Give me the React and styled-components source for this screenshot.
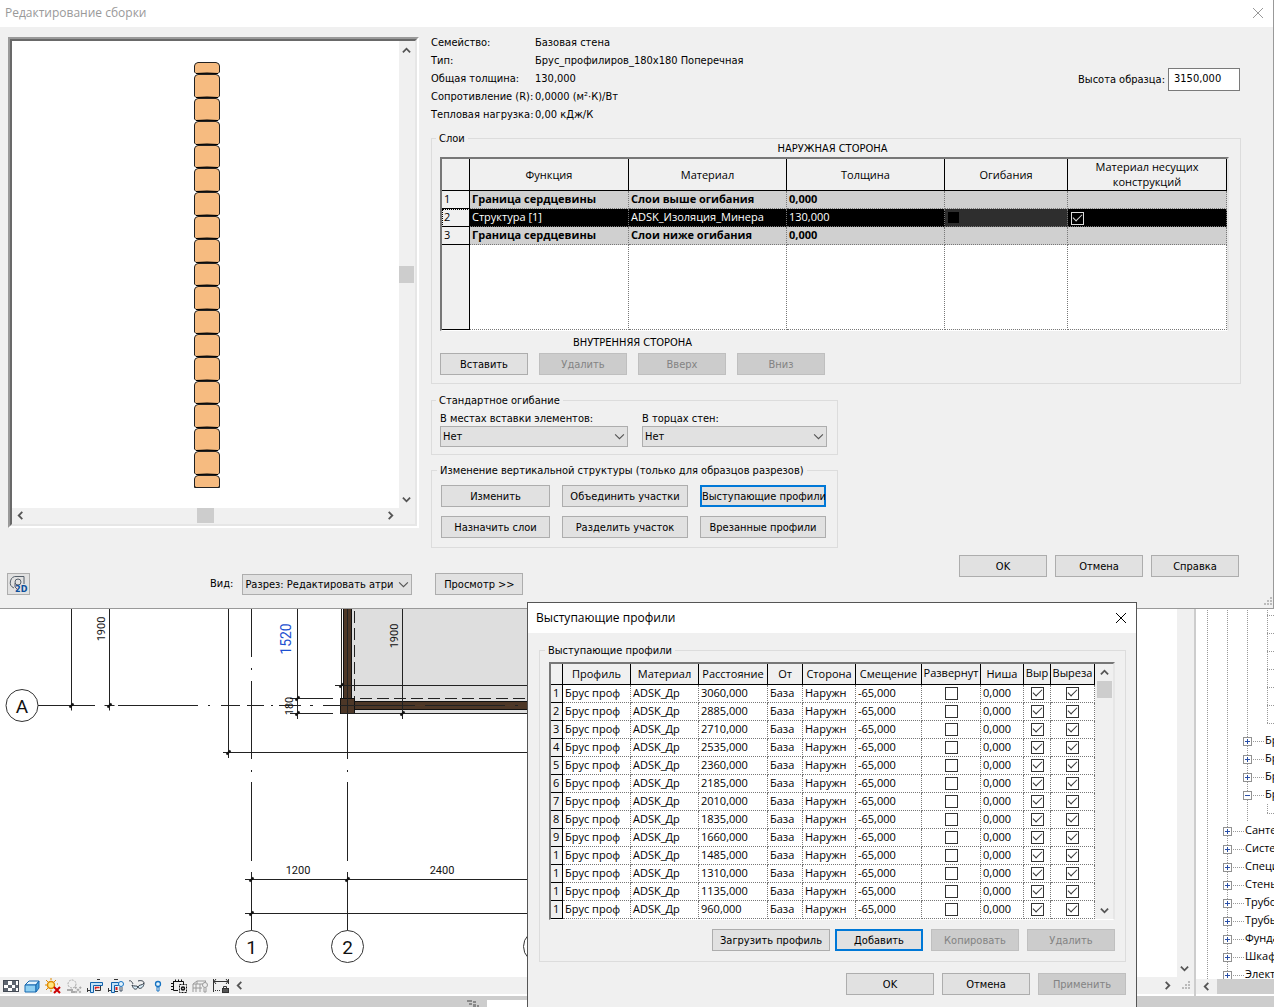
import React from 'react'
import styled, { createGlobalStyle, css } from 'styled-components'

const GlobalStyle = createGlobalStyle`
*, *::before {
  box-sizing: border-box;
}
body {
  margin: 0;
  background: #fff;
  color: #000;
  font-family: "DejaVu Sans Condensed", Roboto, sans-serif;
  font-size: 11px;
  line-height: 12px;
}
button, input, select {
  font: inherit;
  color: inherit;
  margin: 0;
  padding: 0;
  border-radius: 0;
}
`

const gridFont = css`
font-family: "Open Sans", "Noto Sans", sans-serif;
`

const dotsDown = 'repeating-linear-gradient(#999 0 1px, transparent 1px 2px)'
const dotsAcross = 'repeating-linear-gradient(90deg, #999 0 1px, transparent 1px 2px)'

const Desktop = styled.div`
position: relative;
display: flex;
flex-direction: column;
min-height: 100vh;
overflow: hidden;
`

/* ---------- shared controls ---------- */

const Button = styled.button`
flex: none;
width: ${(p) => p.$w || 88}px;
height: 22px;
padding-top: 1px;
white-space: nowrap;
background: #e1e1e1;
border: 1px solid #adadad;
${(p) => p.$focused && css`
border: 2px solid #0078d7;
`}
&:disabled {
  background: #ccc;
  border-color: #bfbfbf;
  color: #838383;
}
`

const Group = styled.fieldset`
min-width: 0;
margin: 0;
padding: ${(p) => p.$pad};
border: 1px solid #dcdcdc;
`

const Legend = styled.legend`
height: 10px;
margin-left: -4px;
padding: 0 3px;
line-height: 12px;
`

const ButtonRow = styled.div`
display: flex;
gap: ${(p) => p.$gap}px;
justify-content: ${(p) => p.$justify || 'flex-start'};
`

const TitleBar = styled.header`
display: flex;
align-items: center;
justify-content: space-between;
height: ${(p) => p.$h}px;
padding: 0 9px ${(p) => p.$drop || 0}px ${(p) => p.$left}px;
background: #fff;
color: ${(p) => p.$color};
`

const Title = styled.h1`
margin: 0;
${gridFont}
font-size: 12px;
font-weight: normal;
line-height: 16px;
`

const IconButton = styled.button`
display: flex;
align-items: center;
justify-content: center;
flex: none;
width: ${(p) => p.$w || 13}px;
height: ${(p) => p.$h || 13}px;
background: none;
border: 0;
`

const SelectBox = styled.span`
display: grid;
align-items: center;
width: ${(p) => p.$w}px;
height: 21px;
& > * {
  grid-area: 1 / 1;
}
& > svg {
  justify-self: end;
  margin-right: 3px;
  pointer-events: none;
}
`

const Select = styled.select`
appearance: none;
width: 100%;
height: 21px;
padding: 1px 18px 0 2px;
background: #e1e1e1;
border: 1px solid #adadad;
`

const Check = styled.input`
appearance: none;
display: block;
width: 13px;
height: 13px;
margin: ${(p) => (p.$left ? '3px 0 0 3px' : '2px auto 0')};
background: ${(p) => (p.$dark ? '#000' : '#fff')};
border: 1px solid ${(p) => (p.$dark ? '#ddd' : '#333')};
&:checked::before {
  content: '';
  display: block;
  width: 9px;
  height: 5px;
  margin: 1px 0 0 1px;
  border: solid ${(p) => (p.$dark ? '#ddd' : '#333')};
  border-width: 0 0 1px 1px;
  transform: rotate(-45deg);
}
&:disabled {
  width: 11px;
  height: 11px;
  border-color: #000;
}
`

const Chevron = ({ dir, color = '#555', thin }) => {
  const d = {
    up: 'M1 7 L5 3 L9 7',
    down: 'M1 3 L5 7 L9 3',
    left: 'M7 1 L3 5 L7 9',
    right: 'M3 1 L7 5 L3 9',
  }[dir]
  return (
    <svg width={thin ? 11 : 9} height={thin ? 11 : 9} viewBox="0 0 10 10" fill="none" stroke={color} strokeWidth={thin ? 1 : 2}>
      <path d={d} />
    </svg>
  )
}

const CloseIcon = () => (
  <svg width="12" height="12" viewBox="0 0 12 12" fill="none" stroke="currentColor">
    <path d="M1 1 L11 11 M11 1 L1 11" />
  </svg>
)

const Grip = () => (
  <svg width="9" height="9" viewBox="0 0 9 9" fill="#bbb">
    <path d="M6 0h2v2h-2zM3 3h2v2h-2zM6 3h2v2h-2zM0 6h2v2h-2zM3 6h2v2h-2zM6 6h2v2h-2z" />
  </svg>
)

/* ---------- scroll bars ---------- */

const ScrollBar = styled.div`
display: flex;
flex: none;
flex-direction: ${(p) => (p.$across ? 'row' : 'column')};
justify-content: space-between;
align-items: flex-start;
background: #f0f0f0;
${(p) => (p.$across ? 'height' : 'width')}: ${(p) => p.$size}px;
`

const Thumb = styled.div`
width: ${(p) => p.$w}px;
height: ${(p) => p.$h}px;
background: #cdcdcd;
`

/* ---------- assembly dialog ---------- */

const AssemblyDialog = styled.section`
background: #f0f0f0;
border-right: 1px solid #999;
border-bottom: 1px solid #999;
`

const AssemblyBody = styled.div`
display: flex;
align-items: flex-start;
padding: 0 32px 0 8px;
`

const Preview = styled.div`
display: flex;
flex: none;
flex-direction: column;
width: 411px;
height: 491px;
margin: 10px 12px 0 0;
border: 2px solid;
border-color: #9a9a9a #fff #fff #9a9a9a;
`

const PreviewInner = styled.div`
display: grid;
grid-template: 1fr 16px / 1fr 16px;
flex: 1;
border: 2px solid;
border-color: #696969 #e6e6e6 #e6e6e6 #696969;
background: #f0f0f0;
`

const PreviewCanvas = styled.svg`
width: 100%;
height: 100%;
background: #fff;
`

const Settings = styled.div`
flex: 1;
min-width: 0;
`

const Summary = styled.div`
display: flex;
justify-content: space-between;
padding-top: 7px;
`

const Facts = styled.dl`
display: grid;
grid-template-columns: 104px auto;
margin: 0;
line-height: 18px;
& dd {
  margin: 0;
}
`

const HeightField = styled.label`
display: flex;
align-items: center;
gap: 3px;
height: 23px;
margin: 34px 1px 0 0;
& input {
  width: 72px;
  height: 23px;
  padding: 0 5px 2px;
  background: #fff;
  border: 1px solid #7a7a7a;
}
`

const Caption = styled.div`
text-align: center;
padding: ${(p) => p.$pad};
`

const Split = styled.div`
width: 407px;
`

const LabeledSelects = styled.div`
display: flex;
gap: 14px;
& label {
  display: block;
  margin-bottom: 1px;
}
`

const Stack = styled.div`
display: flex;
flex-direction: column;
gap: 9px;
`

const AssemblyFooter = styled.footer`
display: flex;
justify-content: space-between;
height: 60px;
padding: 7px 0 0 7px;
`

const ViewTools = styled.div`
display: flex;
align-items: center;
height: 22px;
margin-top: 18px;
& label {
  margin: 0 9px 0 180px;
}
& ${Button} {
  margin-left: 23px;
}
`

const TwoDButton = styled.button`
width: 23px;
height: 22px;
padding: 1px 0 0 1px;
background: #e1e1e1;
border: 1px solid #adadad;
`

const Corner = styled.div`
align-self: flex-end;
height: 11px;
margin-left: 17px;
`

/* ---------- grids ---------- */

const GridFrame = styled.div`
display: flex;
border: solid;
border-width: 2px 2px 1px;
border-color: #777 #e6e6e6 #fff #777;
background: #f0f0f0;
`

const Grid = styled.table`
${gridFont}
table-layout: fixed;
width: ${(p) => p.$w || '100%'};
border-spacing: 0;
line-height: 15px;
& td, & th {
  overflow: hidden;
  padding: 0;
  font-weight: normal;
  white-space: nowrap;
}
& thead th {
  height: ${(p) => p.$head}px;
  padding-bottom: 1px;
  border-right: 1px solid #000;
  border-bottom: 1px solid #000;
  background: #f0f0f0;
}
`

const RowHead = styled.th`
height: 18px;
text-align: left;
vertical-align: top;
background: #f0f0f0;
border: solid #000;
border-width: 0 1px 1px 0;
&&& {
  padding-left: 2px;
}
${(p) => p.$current && css`
outline: 1px dotted #000;
outline-offset: -1px;
`}
`

const Cell = styled.td`
height: ${(p) => p.$h || 18}px;
vertical-align: top;
color: ${(p) => p.$color || '#000'};
background: ${(p) => p.$bg || '#fff'};
border: dotted #777;
border-width: 0 1px 1px 0;
&&& {
  padding-left: ${(p) => (p.$check ? 0 : 2)}px;
  font-weight: ${(p) => (p.$bold ? 'bold' : 'normal')};
}
`

const TallHead = styled.div`
height: 19px;
overflow: hidden;
line-height: 17px;
`

const layerColumns = [28, 159, 158, 158, 123, 159]

const layers = [
  { fn: 'Граница сердцевины', material: 'Слои выше огибания', width: '0,000' },
  { fn: 'Структура [1]', material: 'ADSK_Изоляция_Минера', width: '130,000', selected: true },
  { fn: 'Граница сердцевины', material: 'Слои ниже огибания', width: '0,000' },
]

const LayersTable = () => (
  <GridFrame>
    <Grid $head={32}>
      <colgroup>
        {layerColumns.map((w, i) => <col key={i} width={w} />)}
      </colgroup>
      <thead>
        <tr>
          <th></th>
          <th>Функция</th>
          <th>Материал</th>
          <th>Толщина</th>
          <th>Огибания</th>
          <th>Материал несущих<br />конструкций</th>
        </tr>
      </thead>
      <tbody>
        {layers.map((l, i) => {
          const look = l.selected
            ? { $bg: '#000', $color: '#fff' }
            : { $bg: '#d0d0d0', $bold: true }
          return (
            <tr key={i}>
              <RowHead scope="row" $current={l.selected}>{i + 1}</RowHead>
              <Cell {...look}>{l.fn}</Cell>
              <Cell {...look}>{l.material}</Cell>
              <Cell {...look}>{l.width}</Cell>
              <Cell {...look} $check $bg={l.selected ? '#2e2e2e' : '#d0d0d0'}>
                {l.selected && <Check type="checkbox" disabled $dark $left aria-label="Огибания" />}
              </Cell>
              <Cell {...look} $check>
                {l.selected && <Check type="checkbox" defaultChecked $dark $left aria-label="Материал несущих конструкций" />}
              </Cell>
            </tr>
          )
        })}
        <tr>
          <RowHead></RowHead>
          <Cell $h={85}></Cell>
          <Cell></Cell>
          <Cell></Cell>
          <Cell></Cell>
          <Cell></Cell>
        </tr>
      </tbody>
    </Grid>
  </GridFrame>
)

/* top edges of the logs in the wall section */
const logs = [62, 74, 98, 121, 145, 168, 192, 216, 239, 263, 286, 310, 334, 357, 381, 404, 428, 451, 475, 488]

const WallPreview = () => (
  <PreviewCanvas role="img" aria-label="Разрез стены">
    <g transform="translate(-12 -41)" stroke="#222" fill="#f6bb80">
      {logs.slice(0, -1).map((y, i) => {
        const bottom = logs[i + 1]
        return (
          <g key={y}>
            <path d={`M194.5 ${bottom - 2} V${y + 4} Q194.5 ${y + 1} 198 ${y + 0.5} H216 Q219.5 ${y + 1} 219.5 ${y + 4} V${bottom - 2} L218 ${bottom - 0.5} H196 Z`} />
            {i > 0 && <path d={`M196 ${y - 0.5} Q207 ${y - 1.5} 218 ${y - 0.5}`} fill="none" stroke="#000" />}
          </g>
        )
      })}
      <path d="M194.5 485 V487.5 H219.5 V485" fill="none" />
    </g>
  </PreviewCanvas>
)

const Assembly = () => (
  <AssemblyDialog>
    <TitleBar $h={27} $left={5} $drop={2} $color="#999">
      <Title>Редактирование сборки</Title>
      <IconButton aria-label="Закрыть"><CloseIcon /></IconButton>
    </TitleBar>

    <AssemblyBody>
      <Preview>
        <PreviewInner>
          <WallPreview />
          <ScrollBar $size={16}>
            <IconButton aria-label="Вверх" $w={15} $h={18}><Chevron dir="up" /></IconButton>
            <Thumb $w={15} $h={17} />
            <IconButton aria-label="Вниз" $w={15} $h={18}><Chevron dir="down" /></IconButton>
          </ScrollBar>
          <ScrollBar $across $size={16}>
            <IconButton aria-label="Влево" $w={17} $h={15}><Chevron dir="left" /></IconButton>
            <Thumb $w={17} $h={15} />
            <IconButton aria-label="Вправо" $w={17} $h={15}><Chevron dir="right" /></IconButton>
          </ScrollBar>
        </PreviewInner>
      </Preview>

      <Settings>
        <Summary>
          <Facts>
            <dt>Семейство:</dt><dd>Базовая стена</dd>
            <dt>Тип:</dt><dd>Брус_профилиров_180x180 Поперечная</dd>
            <dt>Общая толщина:</dt><dd>130,000</dd>
            <dt>Сопротивление (R):</dt><dd>0,0000 (м²·К)/Вт</dd>
            <dt>Тепловая нагрузка:</dt><dd>0,00 кДж/К</dd>
          </Facts>
          <HeightField>
            Высота образца:
            <input type="text" defaultValue="3150,000" />
          </HeightField>
        </Summary>

        <Spaced $top={9}>
          <Group $pad="0 11px 8px 8px">
            <Legend>Слои</Legend>
            <Caption $pad="0 4px 2px 0">НАРУЖНАЯ СТОРОНА</Caption>
            <LayersTable />
            <Caption $pad="6px 404px 4px 0">ВНУТРЕННЯЯ СТОРОНА</Caption>
            <ButtonRow $gap={11}>
              <Button>Вставить</Button>
              <Button disabled>Удалить</Button>
              <Button disabled>Вверх</Button>
              <Button disabled>Вниз</Button>
            </ButtonRow>
          </Group>
        </Spaced>

        <Split>
          <Spaced $top={11}>
            <Group $pad="8px 8px 7px 8px">
              <Legend>Стандартное огибание</Legend>
              <LabeledSelects>
                <div>
                  <label htmlFor="inserts">В местах вставки элементов:</label>
                  <SelectBox $w={188}>
                    <Select id="inserts"><option>Нет</option></Select>
                    <Chevron dir="down" thin />
                  </SelectBox>
                </div>
                <div>
                  <label htmlFor="ends">В торцах стен:</label>
                  <SelectBox $w={185}>
                    <Select id="ends"><option>Нет</option></Select>
                    <Chevron dir="down" thin />
                  </SelectBox>
                </div>
              </LabeledSelects>
            </Group>
          </Spaced>

          <Spaced $top={10}>
            <Group $pad="10px 8px 9px 9px">
              <Legend>Изменение вертикальной структуры (только для образцов разрезов)</Legend>
              <Stack>
                <ButtonRow $gap={12}>
                  <Button $w={109}>Изменить</Button>
                  <Button $w={126}>Объединить участки</Button>
                  <Button $w={126} $focused>Выступающие профили</Button>
                </ButtonRow>
                <ButtonRow $gap={12}>
                  <Button $w={109}>Назначить слои</Button>
                  <Button $w={126}>Разделить участок</Button>
                  <Button $w={126}>Врезанные профили</Button>
                </ButtonRow>
              </Stack>
            </Group>
          </Spaced>
        </Split>
      </Settings>
    </AssemblyBody>

    <AssemblyFooter>
      <ViewTools>
        <TwoDButton aria-label="2D">
          <svg width="20" height="19" viewBox="0 0 20 19" fill="none" stroke="#555f6a">
            <path d="M5 13 A6 6 0 0 1 8 1.500 H15 V9" />
            <circle cx="9" cy="7" r="3" />
            <path d="M6 8 V12 L8 14" />
            <text x="6" y="17" fill="#0b4f9c" stroke="none" fontSize="9" fontWeight="bold">2D</text>
          </svg>
        </TwoDButton>
        <label htmlFor="view">Вид:</label>
        <SelectBox $w={170}>
          <Select id="view"><option>Разрез: Редактировать атри</option></Select>
          <Chevron dir="down" thin />
        </SelectBox>
        <Button>Просмотр &gt;&gt;</Button>
      </ViewTools>
      <ButtonRow $gap={8}>
        <Button>OK</Button>
        <Button>Отмена</Button>
        <Button>Справка</Button>
        <Corner><Grip /></Corner>
      </ButtonRow>
    </AssemblyFooter>
  </AssemblyDialog>
)

/* ---------- profiles dialog ---------- */

const Spaced = styled.div`
margin-top: ${(p) => p.$top}px;
`

const ProfilesDialog = styled.section`
position: absolute;
left: 527px;
top: 602px;
bottom: 0;
width: 610px;
overflow: hidden;
background: #f0f0f0;
border: solid #555;
border-width: 1px 1px 0;
`

const ProfilesBody = styled.div`
padding: 12px 10px 11px 11px;
`

const profileColumns = [12, 68, 68, 69, 35, 53, 66, 59, 43, 27, 44]

const distances = ['3060', '2885', '2710', '2535', '2360', '2185', '2010', '1835', '1660', '1485', '1310', '1135', '960']

const ProfilesTable = () => (
  <GridFrame>
    <Grid $head={21} $w="544px">
      <colgroup>
        {profileColumns.map((w, i) => <col key={i} width={w} />)}
      </colgroup>
      <thead>
        <tr>
          <th></th>
          <th>Профиль</th>
          <th>Материал</th>
          <th>Расстояние</th>
          <th>От</th>
          <th>Сторона</th>
          <th>Смещение</th>
          <th><TallHead>Развернут</TallHead></th>
          <th>Ниша</th>
          <th><TallHead>Выр</TallHead></th>
          <th><TallHead>Выреза</TallHead></th>
        </tr>
      </thead>
      <tbody>
        {distances.map((d, i) => (
          <tr key={d}>
            <RowHead scope="row">{i < 9 ? i + 1 : 1}</RowHead>
            <Cell>Брус проф</Cell>
            <Cell>ADSK_Др</Cell>
            <Cell>{d},000</Cell>
            <Cell>База</Cell>
            <Cell>Наружн</Cell>
            <Cell>-65,000</Cell>
            <Cell $check><Check type="checkbox" aria-label="Развернут" /></Cell>
            <Cell>0,000</Cell>
            <Cell $check><Check type="checkbox" defaultChecked aria-label="Вырезает" /></Cell>
            <Cell $check><Check type="checkbox" defaultChecked aria-label="Вырезаемый" /></Cell>
          </tr>
        ))}
      </tbody>
    </Grid>
    <ProfilesScroll $size={15}>
      <div>
        <IconButton aria-label="Вверх" $w={15} $h={17}><Chevron dir="up" /></IconButton>
        <Thumb $w={15} $h={17} />
      </div>
      <IconButton aria-label="Вниз" $w={15} $h={17}><Chevron dir="down" /></IconButton>
    </ProfilesScroll>
  </GridFrame>
)

const ProfilesScroll = styled(ScrollBar)`
margin-left: 2px;
`

const Profiles = () => (
  <ProfilesDialog>
    <TitleBar $h={30} $left={8} $color="#000">
      <Title>Выступающие профили</Title>
      <IconButton aria-label="Закрыть"><CloseIcon /></IconButton>
    </TitleBar>
    <ProfilesBody>
      <Group $pad="7px 10px 10px 9px">
        <Legend>Выступающие профили</Legend>
        <ProfilesTable />
        <Spaced $top={9}>
          <ButtonRow $gap={5} $justify="flex-end">
            <Button $w={118}>Загрузить профиль</Button>
            <ButtonRow $gap={8}>
              <Button $focused>Добавить</Button>
              <Button disabled>Копировать</Button>
              <Button disabled>Удалить</Button>
            </ButtonRow>
          </ButtonRow>
        </Spaced>
      </Group>
      <Spaced $top={11}>
        <ButtonRow $gap={8} $justify="flex-end">
          <Button>OK</Button>
          <Button>Отмена</Button>
          <Button disabled>Применить</Button>
        </ButtonRow>
      </Spaced>
    </ProfilesBody>
  </ProfilesDialog>
)

/* ---------- workspace ---------- */

const Workspace = styled.main`
display: flex;
flex: 1;
min-height: 0;
`

const DrawingPane = styled.div`
display: flex;
flex: 1;
flex-direction: column;
min-width: 0;
`

const DrawingArea = styled.div`
display: flex;
flex: 1;
min-height: 0;
`

const Drawing = styled.svg`
flex: 1;
min-width: 0;
height: auto;
background: #fff;
font-family: Roboto, "Liberation Sans", sans-serif;
`

const ViewBar = styled.div`
display: flex;
align-items: center;
height: 17px;
margin-bottom: 2px;
background: #f0f0f0;
`

const ViewBarEnd = styled.div`
display: flex;
align-items: center;
gap: 8px;
margin-left: auto;
padding-right: 3px;
`

const Tick = ({ x, y }) => (
  <g>
    <path d={`M${x - 5} ${y} H${x + 5} M${x} ${y - 5} V${y + 5}`} stroke="#222" />
    <path d={`M${x - 2} ${y + 2} L${x + 2} ${y - 2}`} stroke="#111" strokeWidth="2" />
  </g>
)

const Bubble = ({ x, y, label }) => (
  <g>
    <circle cx={x} cy={y} r="16" fill="#fff" stroke="#333" />
    <text x={x} y={y + 7} fontSize="19" textAnchor="middle" fill="#111">{label}</text>
  </g>
)

const VerticalText = ({ x, y, size = 11, fill = '#111', children }) => (
  <text transform={`translate(${x} ${y}) rotate(-90)`} fontSize={size} textAnchor="middle" fill={fill}>{children}</text>
)

const FloorPlan = () => (
  <Drawing role="img" aria-label="План этажа">
    <g transform="translate(0 -609)">
      <rect x="341" y="600" width="260" height="113" fill="#dedede" />
      <rect x="341" y="600" width="3" height="100" fill="#fff" />
      <g fill="#4d3727" stroke="#111">
        <rect x="343.5" y="600.5" width="8" height="98" />
        <rect x="354.5" y="701.5" width="250" height="8" />
        <rect x="340.5" y="698.5" width="14" height="15" />
      </g>
      <g stroke="#222" fill="none">
        <path d="M71.5 600 V709 M109.5 600 V709 M228.5 600 V758 M297.5 600 V719 M341.5 600 V698 M402.5 600 V719" />
        <path d="M38 705.500 H95 M118 705.500 H198 M208 705.500 H210 M221 705.500 H240 M247 705.500 H264 M271 705.500 H273 M279 705.500 H301 M310 705.500 H313 M323 705.500 H415 M425 705.500 H505 M515 705.500 H518" />
        <path d="M251.500 600 V657 M251.500 668 V670 M251.500 681 V759 M251.500 770 V772 M251.500 782 V861 M251.500 872 V880 M251.500 884 V931" />
        <path d="M347.500 600 V759 M347.500 770 V772 M347.500 782 V861 M347.500 872 V880 M347.500 884 V931" />
        <path d="M335 685.500 H600 M290 698.500 H333 M290 713.500 H333 M341 713.500 H600" />
        <path d="M354.500 611 V698 M360 698.500 H600" strokeDasharray="12 5" />
        <path d="M223 752.500 H600 M245 879.500 H600 M245 913.500 H600" />
      </g>
      <Tick x={71.5} y={705.5} />
      <Tick x={109.5} y={705.5} />
      <Tick x={228.5} y={752.5} />
      <Tick x={297.5} y={698.5} />
      <Tick x={297.5} y={713.5} />
      <Tick x={341.5} y={685.5} />
      <Tick x={402.5} y={713.5} />
      <Tick x={251.5} y={879.5} />
      <Tick x={347.5} y={879.5} />
      <Tick x={251.5} y={913.5} />
      <VerticalText x={105} y={629}>1900</VerticalText>
      <VerticalText x={398} y={636}>1900</VerticalText>
      <VerticalText x={291} y={639} size={14} fill="#1c4fd0">1520</VerticalText>
      <VerticalText x={293} y={706}>180</VerticalText>
      <text x="298" y="874" fontSize="11" textAnchor="middle" fill="#111">1200</text>
      <text x="442" y="874" fontSize="11" textAnchor="middle" fill="#111">2400</text>
      <Bubble x={22} y={705.5} label="A" />
      <Bubble x={251.5} y={946.5} label="1" />
      <Bubble x={347.5} y={946.5} label="2" />
      <circle cx="539.5" cy="946.5" r="16" fill="#fff" stroke="#333" />
    </g>
  </Drawing>
)

const viewIcons = [
  {
    name: 'Уровень детализации',
    art: (
      <g>
        <rect x="0.500" y="2.500" width="15" height="11" fill="#fff" stroke="#444b55" />
        <path d="M1 3h4v4h-4zM9 3h4v4h-4zM5 7h4v3h-4zM12 7h3v3h-3zM1 10h4v3h-4zM9 10h4v3h-4z" fill="#5d6570" />
      </g>
    ),
  },
  {
    name: 'Визуальный стиль',
    art: (
      <g stroke="#1668b0" strokeLinejoin="round">
        <path d="M1 7 L5 3 H15 L12 7 Z" fill="#e4f4fd" />
        <path d="M1 7 H12 V14 H1 Z" fill="#8fd0f2" />
        <path d="M12 7 L15 3 V10 L12 14 Z" fill="#4ea6dc" />
      </g>
    ),
  },
  {
    name: 'Траектория солнца',
    art: (
      <g fill="none">
        <path d="M6 0V2M1 2L3 4M0 7H2M1 12L3 10M11 2L9 4M6 14V12M12 6H13" stroke="#e08a00" />
        <circle cx="6" cy="7" r="3.500" fill="#ffe680" stroke="#e08a00" strokeWidth="1.500" />
        <path d="M9 9L15 15M15 9L9 15" stroke="#c00" strokeWidth="2" />
      </g>
    ),
  },
  {
    name: 'Тени',
    art: (
      <g fill="none" stroke="#aaa">
        <circle cx="6" cy="6" r="4" strokeDasharray="2 1" />
        <path d="M1 12H7M5 14H9" strokeWidth="2" />
        <path d="M9 9L15 15M15 9L9 15" strokeWidth="2" strokeDasharray="2 1" />
      </g>
    ),
  },
  {
    name: 'Обрезать вид',
    art: (
      <g fill="none">
        <path d="M3.500 14.500V4.500H15.500V7.500H6.500V14.500Z" stroke="#1262ac" fill="#c3e2f7" />
        <path d="M8.500 11.500V9.500H12.500" stroke="#d22" strokeWidth="1.500" />
        <path d="M0 12.500H3M0.500 10V14M13.500 8V12.500H8M10 1.500H13" stroke="#333" />
      </g>
    ),
  },
  {
    name: 'Показать границу обрезки',
    art: (
      <g fill="none">
        <path d="M3.500 14.500V4.500H10.500V7.500H6.500V14.500Z" stroke="#1262ac" fill="#c3e2f7" />
        <path d="M8.500 9V12" stroke="#d22" strokeWidth="2" />
        <path d="M0 12.500H3M0.500 10V14M6 1.500H10M7 13.500H10" stroke="#333" />
        <circle cx="13" cy="6" r="2.500" fill="#e4f4fd" stroke="#1673c2" />
        <path d="M12 9V13H14V9" stroke="#456" />
      </g>
    ),
  },
  {
    name: 'Временно скрыть',
    art: (
      <g fill="#d9edf8" stroke="#333d48">
        <path d="M0 3C2 2 3 4 4 6M9 3C12 2 15 3 15 5" fill="none" />
        <path d="M3 7C4 11 7 13 9 9C8 7 5 9 3 7ZM9 9C10 12 15 10 15 5C13 8 10 6 9 9Z" />
      </g>
    ),
  },
  {
    name: 'Показать скрытые',
    art: (
      <g>
        <circle cx="8" cy="6" r="2.500" fill="#e4f4fd" stroke="#1673c2" strokeWidth="1.300" />
        <path d="M7 9H9V13H7Z" fill="#fff" stroke="#1673c2" />
      </g>
    ),
  },
  {
    name: 'Временные свойства вида',
    art: (
      <g fill="none" stroke="#111">
        <path d="M2.500 3.500H12.500V6M2.500 3V12.500H7" />
        <path d="M4.500 1.500V3M7.500 1.500V3M10.500 1.500V3M0 5.500H2M0 8.500H2M0 11.500H2" />
        <rect x="8.500" y="6.500" width="7" height="8" strokeDasharray="2 1" />
        <circle cx="12" cy="10.500" r="1.500" strokeWidth="1.500" />
      </g>
    ),
  },
  {
    name: 'Аналитическая модель',
    art: (
      <g fill="none" stroke="#9a9a9a">
        <path d="M1 6L5 3H14L11 6ZM1 6V14M4 6V14M8 6V14M1 10H10M5 3V6" />
        <circle cx="13" cy="7" r="2.500" fill="#eee" />
        <path d="M12 10V14H14V10" />
      </g>
    ),
  },
  {
    name: 'Ограничения',
    art: (
      <g fill="none" stroke="#333">
        <path d="M0 3.500H16M0.500 1V14M15.500 1V6M3 1L1 3.500L3 6M13 1L15 3.500L13 6" />
        <path d="M2 12.500H8" strokeDasharray="1 1" />
        <path d="M10.500 10V8.500H13.500V10" />
        <rect x="9.500" y="10.500" width="6" height="4" fill="#555" />
      </g>
    ),
  },
]

const TreePane = styled.aside`
display: flex;
flex: none;
flex-direction: column;
width: 80px;
overflow: hidden;
background: #fff;
border-left: 2px solid #cdcdcd;
`

const Tree = styled.div`
flex: none;
height: 373px;
margin-top: -3px;
padding-left: 1px;
overflow: hidden;
${gridFont}
`

const TreeRow = styled.div`
display: flex;
height: 18px;
line-height: 16px;
white-space: nowrap;
`

const Guide = styled.span`
display: flex;
align-items: center;
flex: none;
width: 20px;
padding-left: 6px;
background: ${dotsDown} 10px 0 / 1px ${(p) => (p.$last ? '50%' : '100%')} no-repeat;
`

const Expander = styled.button`
display: flex;
align-items: center;
justify-content: center;
flex: none;
width: 9px;
height: 9px;
background: #fff;
border: 1px solid #919191;
`

const Stub = styled.span`
flex: none;
width: ${(p) => p.$back + 8}px;
margin-left: -${(p) => p.$back}px;
background: ${dotsAcross} 0 50% / 100% 1px no-repeat;
`

const Node = ({ depth, open, label }) => (
  <TreeRow>
    {Array.from({ length: depth }, (_, i) => <Guide key={i} />)}
    <Guide>
      <Expander aria-label={label}>
        <svg width="7" height="7" viewBox="0 0 7 7" stroke="#2a4fa8">
          <path d={open ? 'M1 3.5H6' : 'M1 3.5H6M3.5 1V6'} />
        </svg>
      </Expander>
    </Guide>
    <Stub $back={4} />
    <span>{label}</span>
  </TreeRow>
)

const Leaf = ({ depth, last }) => (
  <TreeRow>
    {Array.from({ length: depth }, (_, i) => <Guide key={i} />)}
    <Guide $last={last} />
    <Stub $back={10} />
  </TreeRow>
)

const categories = ['Сантехника', 'Системы', 'Специальное', 'Стены', 'Трубопровод', 'Трубы', 'Фундамент', 'Шкафы', 'Электрика']

const ProjectTree = () => (
  <TreePane>
    <Tree>
      {[0, 1, 2, 3, 4, 5, 6].map((i) => <Leaf key={i} depth={3} last={i === 6} />)}
      <Node depth={2} label="Брус" />
      <Node depth={2} label="Брус" />
      <Node depth={2} label="Брус" />
      <Node depth={2} label="Брус" open />
      <Leaf depth={3} last />
      {categories.map((c) => <Node key={c} depth={1} label={c} />)}
    </Tree>
    <TreeScroll $across $size={15}>
      <IconButton aria-label="Влево" $w={17} $h={15}><Chevron dir="left" /></IconButton>
      <Thumb $w={57} $h={15} />
    </TreeScroll>
  </TreePane>
)

const TreeScroll = styled(ScrollBar)`
padding-left: 2px;
margin-bottom: 2px;
`

const StatusBar = styled.footer`
display: flex;
align-items: flex-start;
gap: 7px;
height: 11px;
padding: 4px 0 0 466px;
background: #cdcdcd;
`

const StatusField = styled.div`
width: 60px;
height: 7px;
background: #fff;
`

export default function App() {
  return (
    <Desktop>
      <GlobalStyle />
      <Assembly />

      <Workspace>
        <DrawingPane>
          <DrawingArea>
            <FloorPlan />
            <ScrollBar $size={17}>
              <span />
              <IconButton aria-label="Вниз" $w={15} $h={18}><Chevron dir="down" /></IconButton>
            </ScrollBar>
          </DrawingArea>
          <ViewBar>
            {viewIcons.map((icon) => (
              <IconButton key={icon.name} aria-label={icon.name} $w={21} $h={17}>
                <svg width="16" height="16" viewBox="0 0 16 16">{icon.art}</svg>
              </IconButton>
            ))}
            <IconButton aria-label="Свернуть" $w={17} $h={17}><Chevron dir="left" /></IconButton>
            <ViewBarEnd>
              <IconButton aria-label="Вправо"><Chevron dir="right" /></IconButton>
              <Grip />
            </ViewBarEnd>
          </ViewBar>
        </DrawingPane>
        <ProjectTree />
      </Workspace>

      <StatusBar>
        <svg width="14" height="7" viewBox="0 0 14 7" fill="#888">
          <path d="M1 0h5v2h-5zM7 1h3v2h-3zM3 3h3v2h-3zM7 4h3v3h-3zM11 5h2v2h-2z" />
        </svg>
        <StatusField />
      </StatusBar>

      <Profiles />
    </Desktop>
  )
}
